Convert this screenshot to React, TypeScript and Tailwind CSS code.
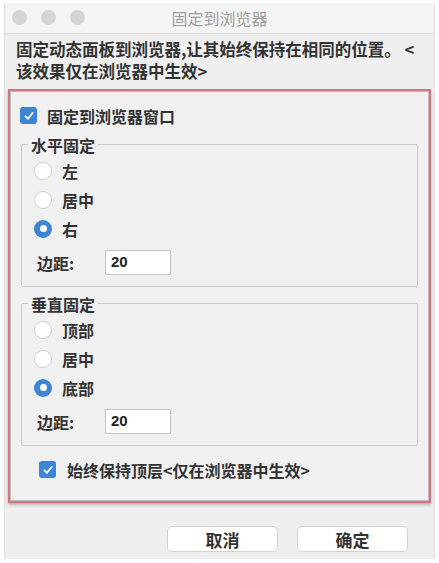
import React from "react";

const font = { fontFamily: '"Noto Sans CJK SC", "Noto Sans", sans-serif' };

function Checkbox() {
  return (
    <div className="w-[17px] h-[17px] rounded-[3px] bg-[#3f85d6] flex items-center justify-center shrink-0">
      <svg width="12" height="12" viewBox="0 0 12 12">
        <path d="M2.5 6.3 L5 8.8 L9.6 3" stroke="white" strokeWidth="1.8" fill="none" strokeLinecap="round" strokeLinejoin="round" />
      </svg>
    </div>
  );
}

function Radio({ on }: { on?: boolean }) {
  return on ? (
    <div className="w-[18px] h-[18px] rounded-full bg-[#3f85d6] flex items-center justify-center shrink-0">
      <div className="w-[7px] h-[7px] rounded-full bg-white" />
    </div>
  ) : (
    <div className="w-[18px] h-[18px] rounded-full bg-white border border-[#cfcfcf] shrink-0" />
  );
}

function Group({ title, items, sel }: { title: string; items: string[]; sel: number }) {
  return (
    <div className="relative border border-[#c8c8c8] rounded-[2px] mx-[10px] pt-[15px] pb-[11px] pl-[12px]">
      <div className="absolute left-[6px] top-[-11px] bg-[#f0f0f0] px-[3px] text-[16px] leading-[22px] font-semibold text-[#333]">{title}</div>
      <div className="flex flex-col gap-[8px]">
        {items.map((t, i) => (
          <div key={t} className="flex items-center gap-[10px] h-[21px]">
            <Radio on={i === sel} />
            <span className="text-[16px] font-semibold text-[#333]">{t}</span>
          </div>
        ))}
      </div>
      <div className="flex items-center mt-[11px] pl-[3px]">
        <span className="text-[16px] font-semibold text-[#333] w-[68px]">边距:</span>
        <div className="w-[66px] h-[25px] bg-white border border-[#c4c4c4] flex items-center pl-[5px] text-[15px] font-bold text-[#222]" style={{ fontFamily: '"Liberation Sans", sans-serif' }}>20</div>
      </div>
    </div>
  );
}

export default function App() {
  return (
    <div className="w-[439px] h-[563px] bg-white pt-[3px] pl-[4px] pr-[4px]" style={font}>
      <div className="h-[556px] bg-[#efefef] border-x border-[#dedede] flex flex-col">
        <div className="relative h-[31px] bg-[#f4f4f4] border-b border-[#dadada] flex items-center justify-center">
          <div className="absolute left-[7px] top-[7px] flex gap-[14px]">
            <div className="w-[15px] h-[15px] rounded-full bg-[#d4d4d4]" />
            <div className="w-[15px] h-[15px] rounded-full bg-[#d4d4d4]" />
            <div className="w-[15px] h-[15px] rounded-full bg-[#d4d4d4]" />
          </div>
          <span className="text-[16px] text-[#9d9d9d]">固定到浏览器</span>
        </div>
        <div className="px-[11px] pt-[4px] text-[16.5px] leading-[22px] font-semibold text-[#333]">
          固定动态面板到浏览器,让其始终保持在相同的位置。 &lt;<br />该效果仅在浏览器中生效&gt;
        </div>
        <div className="mx-[3px] mt-[7px] border-2 border-[#d4747c] shadow-[0_2px_3px_rgba(0,0,0,0.25)]">
          <div className="border border-[#bdbdbd] bg-[#f0f0f0] pt-[13px] pb-[20px]">
            <div className="flex items-center gap-[10px] pl-[9px] h-[21px]">
              <Checkbox />
              <span className="text-[16px] font-semibold text-[#333]">固定到浏览器窗口</span>
            </div>
            <div className="mt-[18px]">
              <Group title="水平固定" items={["左", "居中", "右"]} sel={2} />
            </div>
            <div className="mt-[16px]">
              <Group title="垂直固定" items={["顶部", "居中", "底部"]} sel={2} />
            </div>
            <div className="flex items-center gap-[11px] pl-[28px] mt-[13px] h-[21px]">
              <Checkbox />
              <span className="text-[16px] font-semibold text-[#333]">始终保持顶层&lt;仅在浏览器中生效&gt;</span>
            </div>
          </div>
        </div>
        <div className="flex justify-end gap-[19px] pr-[26px] mt-[23px]">
          <button className="w-[111px] h-[26px] bg-white rounded-[5px] border border-[#d2d2d2] text-[17px] font-semibold text-[#333]">取消</button>
          <button className="w-[111px] h-[26px] bg-white rounded-[5px] border border-[#d2d2d2] text-[17px] font-semibold text-[#333]">确定</button>
        </div>
      </div>
    </div>
  );
}
